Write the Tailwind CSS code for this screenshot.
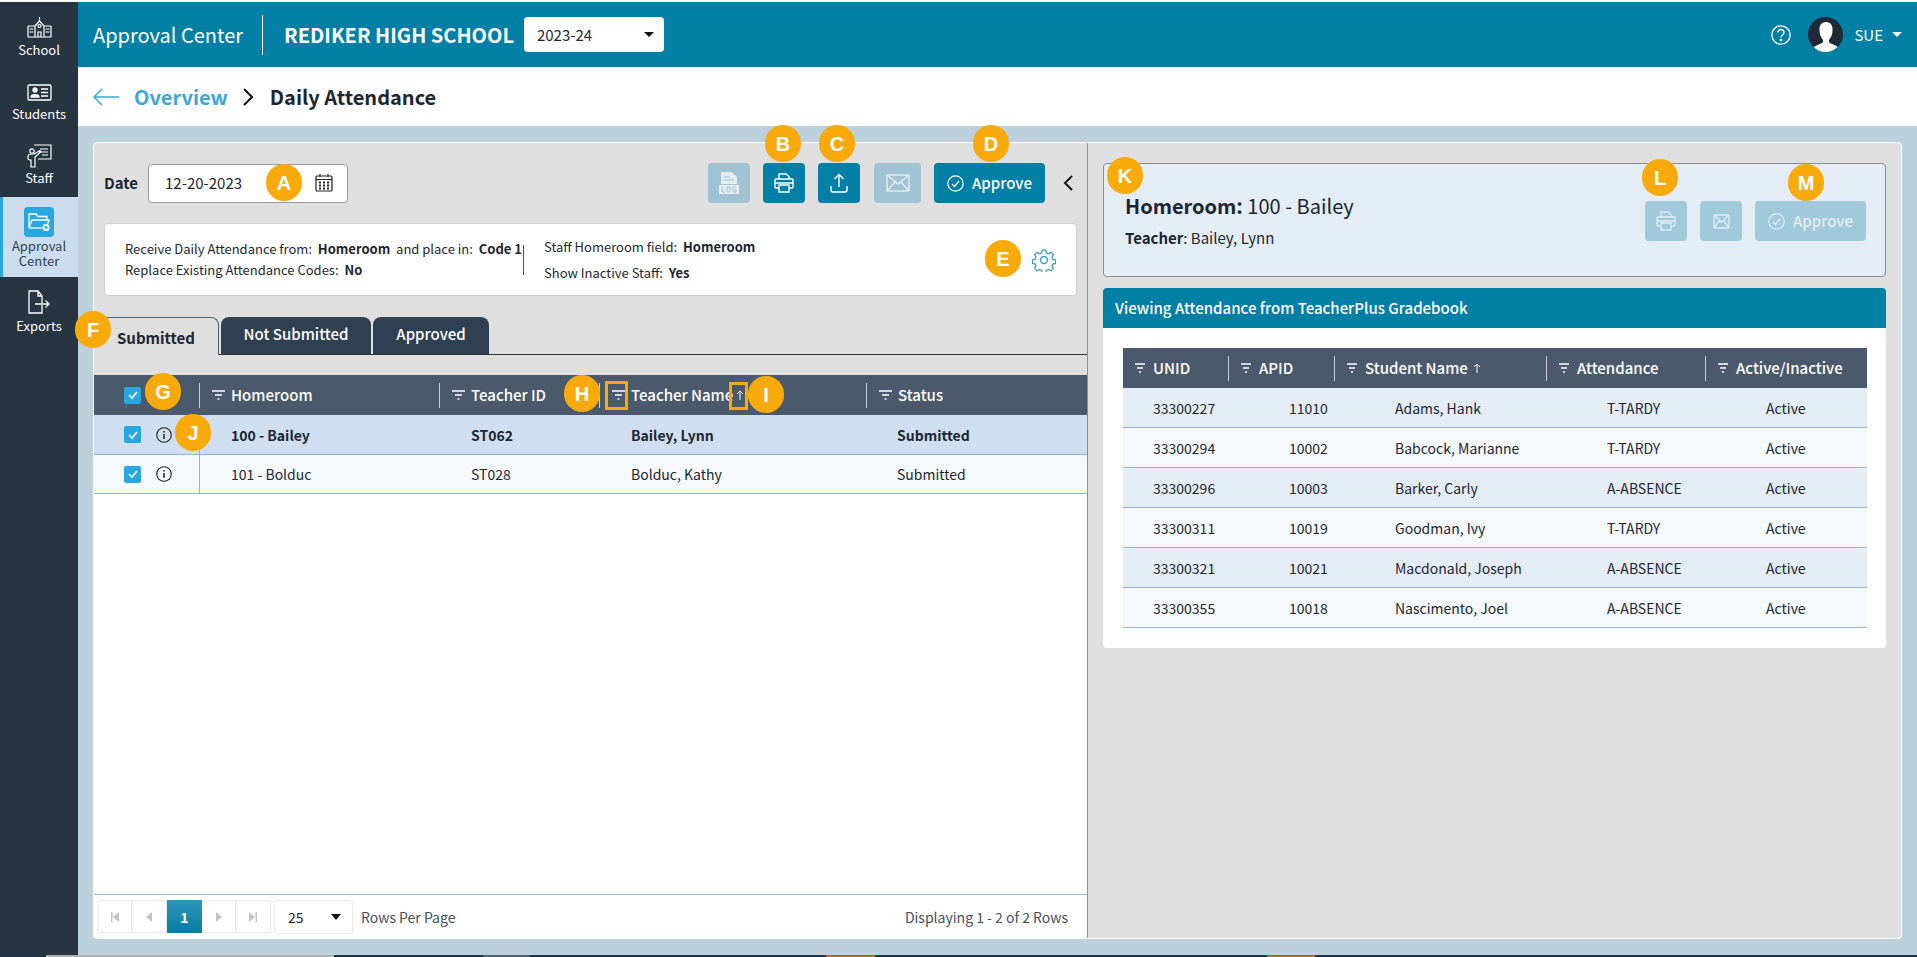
<!DOCTYPE html>
<html lang="en">
<head>
  <meta charset="UTF-8" />
  <title>Approval Center</title>
  <script src="https://cdn.jsdelivr.net/npm/@tailwindcss/browser@4"></script>
</head>
<body class="bg-white">
<div class="relative flex h-[957px] w-[1917px] flex-col overflow-hidden pt-[2px] font-['Noto_Sans_CJK_JP','Noto_Sans',sans-serif] text-[14px] leading-[20px] text-[#1c2733]">
  <div class="flex min-h-0 flex-1">

    <!-- Sidebar -->
    <aside class="flex w-[78px] shrink-0 flex-col bg-[#273442] text-center text-[13px] leading-[15px] text-white">
      <div class="flex h-[65px] flex-col items-center pt-[15px]">
        <svg class="h-[21px] w-[25px]" viewBox="0 0 25 21" fill="none" stroke="currentColor" stroke-width="1.2"><path d="M1 9h7M17 9h7M1 9v11h7V9M17 9v11h7V9M8 9l4.500-5 4.500 5v11H8zM12.500 4V0M2.500 12h4M2.500 15h4M18.500 12h4M18.500 15h4M11 20v-5h3v5"/><circle cx="12.500" cy="9" r="1.500"/></svg>
        <span class="mt-[4px]">School</span>
      </div>
      <div class="flex h-[65px] flex-col items-center pt-[17px]">
        <svg class="h-[17px] w-[25px]" viewBox="0 0 25 17" fill="none" stroke="currentColor" stroke-width="1.300"><rect x="1" y="1" width="23" height="15" rx="1"/><circle cx="8" cy="6" r="2" fill="currentColor"/><path d="M4 13c0-3 8-3 8 0z" fill="currentColor"/><path d="M14 5h7M14 8.500h7M14 12h7"/></svg>
        <span class="mt-[5px]">Students</span>
      </div>
      <div class="flex h-[65px] flex-col items-center pt-[12px]">
        <svg class="h-[24px] w-[25px]" viewBox="0 0 25 24" fill="none" stroke="currentColor" stroke-width="1.200"><path d="M7 1h17v14H11M13 5h8M13 8h8M15 11h6"/><circle cx="5" cy="7" r="2.200"/><path d="M1 12.500c0-2 2-2.500 4-2.500h2l6-3.500.7 1.300L8 13v10H4v-7H2.500L1 15z"/></svg>
        <span class="mt-[2px]">Staff</span>
      </div>
      <div class="flex h-[80px] flex-col items-center border-l-[3px] border-[#29a8df] bg-[#cbdcee] pr-[3px] pt-[10px] text-[#33414f]">
        <div class="flex h-[30px] w-[30px] items-center justify-center rounded-[4px] bg-[#29a8df]">
          <svg class="h-[22px] w-[24px]" viewBox="0 0 24 22" fill="none" stroke="white" stroke-width="1.300"><path d="M2 16V3h7l2 2.500h9V9M2 17l3-8h17l-2 6"/><path d="M2 17h13"/><circle cx="19" cy="16.500" r="3.500" fill="white" stroke="none"/><path d="M17.300 16.500h3.400M19 14.800v3.400" stroke="#29a8df"/></svg>
        </div>
        <span class="mt-[1px]">Approval<br/>Center</span>
      </div>
      <div class="flex h-[65px] flex-col items-center pt-[13px]">
        <svg class="h-[24px] w-[24px]" viewBox="0 0 24 24" fill="none" stroke="currentColor" stroke-width="1.300"><path d="M15 15V23H2V1h9l4 5v7M11 1v5h4M8 14h14M18.500 10.500 22 14l-3.500 3.500"/></svg>
        <span class="mt-[4px]">Exports</span>
      </div>
    </aside>

    <main class="flex min-w-0 flex-1 flex-col">
      <!-- Header -->
      <header class="flex h-[65px] shrink-0 items-center bg-[#017fa4] pl-[15px] text-white">
        <span class="text-[20px]">Approval Center</span>
        <span class="ml-[19px] h-[40px] w-px bg-white"></span>
        <span class="ml-[21px] text-[20px] font-semibold">REDIKER HIGH SCHOOL</span>
        <div class="ml-[10px] flex h-[35px] w-[140px] items-center rounded-[4px] bg-white pl-[13px] pr-[10px] text-[15px] text-[#1c2733]">
          2023-24
          <span class="ml-auto h-0 w-0 border-x-[5px] border-t-[5px] border-x-transparent border-t-[#111]"></span>
        </div>
        <svg class="ml-auto h-[20px] w-[20px]" viewBox="0 0 20 20" fill="none" stroke="white" stroke-width="1.300"><circle cx="10" cy="10" r="9.200"/><path d="M7 7.500c0-4 6-4 6 0 0 2.500-3 2.500-3 5"/><circle cx="10" cy="15" r=".7" fill="white"/></svg>
        <div class="ml-[17px] flex h-[35px] w-[35px] items-end justify-center overflow-hidden rounded-full bg-[#1f2a38]">
          <svg class="h-[30px] w-[28px]" viewBox="0 0 28 30" fill="white"><path d="M14 0c5 0 7 4 6.500 9 0 4-2 7-3.500 9v2c1 2 8 3 11 7v3H0v-3c3-4 10-5 11-7v-2c-1.500-2-3.500-5-3.500-9C7 4 9 0 14 0z"/></svg>
        </div>
        <span class="ml-[11px] text-[15px]">SUE</span>
        <span class="ml-[9px] mr-[15px] h-0 w-0 border-x-[5px] border-t-[5px] border-x-transparent border-t-white"></span>
      </header>

      <!-- Breadcrumb -->
      <div class="flex h-[59px] shrink-0 items-center bg-white pl-[15px] text-[20px] font-semibold">
        <svg class="h-[18px] w-[26px]" viewBox="0 0 26 18" fill="none" stroke="#3ba7d8" stroke-width="1.500"><path d="M26 9H1M9 1 1 9l8 8"/></svg>
        <span class="ml-[15px] text-[#3ba7d8]">Overview</span>
        <svg class="ml-[15px] h-[18px] w-[10px]" viewBox="0 0 10 18" fill="none" stroke="#111" stroke-width="2"><path d="m1 1 8 8-8 8"/></svg>
        <span class="ml-[17px] text-[#1c2733]">Daily Attendance</span>
      </div>

      <!-- Content -->
      <div class="min-h-0 flex-1 bg-[#bdd1dc] px-[15px] py-[16px]">
        <div class="flex h-full rounded-[4px] border border-white bg-[#dfdfdf]">

          <!-- Left pane -->
          <section class="flex w-[994px] shrink-0 flex-col border-r border-[#8f8f8f] pt-[20px]">
            <div class="flex h-[40px] shrink-0 items-center pl-[10px] pr-[14px]">
              <span class="text-[15px] font-semibold">Date</span>
              <div class="ml-[10px] flex h-[39px] w-[200px] items-center rounded-[4px] border border-[#9a9a9a] bg-white pl-[16px] text-[15px]">
                12-20-2023
                <svg class="ml-auto mr-[14px] h-[18px] w-[18px]" viewBox="0 0 18 18" fill="none" stroke="#222" stroke-width="1.200"><rect x="1" y="2" width="16" height="15" rx="1"/><path d="M1 5.500h16M5 0v3M13 0v3" /><path d="M4 8.500h2M8 8.500h2M12 8.500h2M4 11.500h2M8 11.500h2M12 11.500h2M4 14.500h2M8 14.500h2M12 14.500h2" stroke-width="1.800"/></svg>
              </div>
              <button class="ml-auto flex h-[40px] w-[42px] items-center justify-center rounded-[4px] bg-[#9fc3d2]">
                <svg class="h-[24px] w-[24px]" viewBox="0 0 24 24" fill="#e4ecef"><path d="M4 1h11l5 5v7H4zM2 14h20v9H2z"/><path d="M7 6h6M7 9h10" stroke="#9fc3d2" stroke-width="1"/><path d="M5 16v5h3M10 16h3v5h-3zM19 16h-3v5h3v-2h-1.500" fill="none" stroke="#9fc3d2" stroke-width="1"/></svg>
              </button>
              <button class="ml-[13px] flex h-[40px] w-[42px] items-center justify-center rounded-[4px] bg-[#017fa4]">
                <svg class="h-[20px] w-[20px]" viewBox="0 0 20 20" fill="none" stroke="white" stroke-width="1.400"><path d="M5 6V1h7l3 2.500V6M5 15H2a1 1 0 0 1-1-1V7a1 1 0 0 1 1-1h16a1 1 0 0 1 1 1v7a1 1 0 0 1-1 1h-3M5 12h10v7H5zM1 10h18"/></svg>
              </button>
              <button class="ml-[13px] flex h-[40px] w-[42px] items-center justify-center rounded-[4px] bg-[#017fa4]">
                <svg class="h-[20px] w-[20px]" viewBox="0 0 20 20" fill="none" stroke="white" stroke-width="1.400"><path d="M10 14V2M5.500 6 10 1.500 14.500 6M2 13v4a2 2 0 0 0 2 2h12a2 2 0 0 0 2-2v-4"/></svg>
              </button>
              <button class="ml-[14px] flex h-[40px] w-[47px] items-center justify-center rounded-[4px] bg-[#9fc3d2]">
                <svg class="h-[18px] w-[24px]" viewBox="0 0 24 18" fill="none" stroke="#e4ecef" stroke-width="1.500"><rect x="1" y="1" width="22" height="16" rx="1"/><path d="m1 1 11 9 11-9M1 17l8-9M23 17l-8-9"/></svg>
              </button>
              <button class="ml-[13px] flex h-[40px] w-[111px] items-center justify-center gap-[8px] rounded-[4px] bg-[#017fa4] text-[15px] font-medium text-white">
                <svg class="h-[17px] w-[17px]" viewBox="0 0 17 17" fill="none" stroke="white" stroke-width="1.200"><circle cx="8.500" cy="8.500" r="7.700"/><path d="m5 9 2.500 2.500L12 6"/></svg>
                Approve
              </button>
              <svg class="ml-[18px] h-[16px] w-[10px]" viewBox="0 0 10 16" fill="none" stroke="#111" stroke-width="2"><path d="M9 1 2 8l7 7"/></svg>
            </div>

            <div class="mx-[10px] mt-[20px] flex h-[73px] shrink-0 items-center rounded-[4px] border border-[#cfcfcf] bg-white pl-[20px] pr-[20px] text-[13px] leading-[20px]">
              <div class="w-[398px]">
                <div>Receive Daily Attendance from:&nbsp; <b class="font-semibold">Homeroom</b>&nbsp; and place in:&nbsp; <b class="font-semibold">Code 1</b></div>
                <div class="mt-px">Replace Existing Attendance Codes:&nbsp; <b class="font-semibold">No</b></div>
              </div>
              <span class="h-[30px] w-px bg-[#555]"></span>
              <div class="ml-[20px]">
                <div>Staff Homeroom field:&nbsp; <b class="font-semibold">Homeroom</b></div>
                <div class="mt-[6px]">Show Inactive Staff:&nbsp; <b class="font-semibold">Yes</b></div>
              </div>
              <svg class="ml-auto h-[24px] w-[24px]" viewBox="0 0 24 24" fill="none" stroke="#3a9dbf" stroke-width="1.400"><circle cx="12" cy="12" r="3.500"/><path d="M10 1h4l.7 3 2.200 1 2.700-1.600 2.800 2.800-1.600 2.700 1 2.200 3 .7v4l-3 .7-1 2.200 1.600 2.700-2.800 2.800-2.700-1.600-2.200 1-.7 3h-4l-.7-3-2.200-1-2.700 1.600-2.800-2.800 1.600-2.700-1-2.200-3-.7v-4l3-.7 1-2.200L1.600 6.200l2.800-2.800 2.700 1.600 2.200-1z" transform="translate(1.200 1.200) scale(.9)"/></svg>
            </div>

            <div class="mt-[21px] flex h-[38px] shrink-0 items-end gap-[2px] border-b border-[#333]">
              <div class="-mb-px flex h-[38px] w-[125px] items-center justify-center rounded-tr-[8px] border-r border-t border-[#55606c] bg-[#dfdfdf] pt-[2px] text-[15px] font-semibold">Submitted</div>
              <div class="flex h-[37px] w-[150px] items-center justify-center rounded-t-[8px] bg-[#2e4052] pb-[3px] text-[15px] font-medium text-white">Not Submitted</div>
              <div class="flex h-[37px] w-[116px] items-center justify-center rounded-t-[8px] bg-[#2e4052] pb-[3px] text-[15px] font-medium text-white">Approved</div>
            </div>

            <!-- Homeroom table -->
            <div class="mt-[20px] grid h-[40px] shrink-0 grid-cols-[106px_240px_160px_267px_1fr] items-center bg-[#4a5a6c] text-[15px] font-medium text-white">
              <div class="flex h-[25px] items-center border-r border-white/70 pl-[30px]">
                <span class="flex h-[17px] w-[17px] items-center justify-center rounded-[2px] bg-[#29a8df]"><svg class="h-[10px] w-[10px]" viewBox="0 0 10 10" fill="none" stroke="white" stroke-width="1.600"><path d="m1 5 3 3 5-6"/></svg></span>
              </div>
              <div class="flex h-[25px] items-center gap-[6px] border-r border-white/70 pl-[12px]">
                <svg class="h-[10px] w-[13px]" viewBox="0 0 13 10" stroke="white" stroke-width="1.300"><path d="M0 1h13M3 5h7M5.500 9h2"/></svg>Homeroom
              </div>
              <div class="flex h-[25px] items-center gap-[6px] border-r border-white/70 pl-[12px]">
                <svg class="h-[10px] w-[13px]" viewBox="0 0 13 10" stroke="white" stroke-width="1.300"><path d="M0 1h13M3 5h7M5.500 9h2"/></svg>Teacher ID
              </div>
              <div class="flex h-[25px] items-center gap-[6px] border-r border-white/70 pl-[12px]">
                <svg class="h-[10px] w-[13px]" viewBox="0 0 13 10" stroke="white" stroke-width="1.300"><path d="M0 1h13M3 5h7M5.500 9h2"/></svg>Teacher Name
                <svg class="-ml-[3px] h-[10px] w-[8px]" viewBox="0 0 8 10" fill="none" stroke="white" stroke-width="1"><path d="M4 10V1M1 4l3-3 3 3"/></svg>
              </div>
              <div class="flex h-[25px] items-center gap-[6px] pl-[12px]">
                <svg class="h-[10px] w-[13px]" viewBox="0 0 13 10" stroke="white" stroke-width="1.300"><path d="M0 1h13M3 5h7M5.500 9h2"/></svg>Status
              </div>
            </div>
            <div class="flex min-h-0 flex-1 flex-col bg-white">
              <div class="grid h-[40px] grid-cols-[106px_240px_160px_267px_1fr] items-center border-b border-[#8fb4dc] bg-[#d0dfef] font-semibold">
                <div class="flex h-full items-center gap-[15px] border-r border-[#8fb4dc] pl-[30px]">
                  <span class="flex h-[17px] w-[17px] items-center justify-center rounded-[2px] bg-[#29a8df]"><svg class="h-[10px] w-[10px]" viewBox="0 0 10 10" fill="none" stroke="white" stroke-width="1.600"><path d="m1 5 3 3 5-6"/></svg></span>
                  <svg class="h-[16px] w-[16px]" viewBox="0 0 16 16" fill="none" stroke="#222" stroke-width="1.100"><circle cx="8" cy="8" r="7.300"/><path d="M8 7v5M8 4v1.500" stroke-width="1.500"/></svg>
                </div>
                <div class="pl-[31px]">100 - Bailey</div>
                <div class="pl-[31px]">ST062</div>
                <div class="pl-[31px]">Bailey, Lynn</div>
                <div class="pl-[30px]">Submitted</div>
              </div>
              <div class="grid h-[39px] grid-cols-[106px_240px_160px_267px_1fr] items-center border-b border-[#8fb4dc] bg-[#f5f9fb]">
                <div class="flex h-full items-center gap-[15px] border-r border-[#8fb4dc] pl-[30px]">
                  <span class="flex h-[17px] w-[17px] items-center justify-center rounded-[2px] bg-[#29a8df]"><svg class="h-[10px] w-[10px]" viewBox="0 0 10 10" fill="none" stroke="white" stroke-width="1.600"><path d="m1 5 3 3 5-6"/></svg></span>
                  <svg class="h-[16px] w-[16px]" viewBox="0 0 16 16" fill="none" stroke="#222" stroke-width="1.100"><circle cx="8" cy="8" r="7.300"/><path d="M8 7v5M8 4v1.500" stroke-width="1.500"/></svg>
                </div>
                <div class="pl-[31px]">101 - Bolduc</div>
                <div class="pl-[31px]">ST028</div>
                <div class="pl-[31px]">Bolduc, Kathy</div>
                <div class="pl-[30px]">Submitted</div>
              </div>

              <!-- Pager -->
              <div class="mt-auto flex h-[44px] shrink-0 items-center border-t border-[#a3bdd0] pl-[4px] pr-[19px] text-[14px]">
                <div class="flex h-[33px] text-[#c4c4c4]">
                  <span class="flex w-[34px] items-center justify-center rounded-l-[3px] border border-[#e8e8e8]"><svg class="h-[10px] w-[8px]" viewBox="0 0 8 10" fill="currentColor"><path d="M0 0h1.500v10H0zM8 0v10L2 5z"/></svg></span>
                  <span class="flex w-[35px] items-center justify-center border-y border-r border-[#e8e8e8]"><svg class="h-[10px] w-[6px]" viewBox="0 0 6 10" fill="currentColor"><path d="M6 0v10L0 5z"/></svg></span>
                  <span class="flex w-[35px] items-center justify-center bg-gradient-to-b from-[#2b96b8] to-[#017fa4] font-bold text-white">1</span>
                  <span class="flex w-[34px] items-center justify-center border-y border-r border-[#e8e8e8]"><svg class="h-[10px] w-[6px]" viewBox="0 0 6 10" fill="currentColor"><path d="M0 0v10l6-5z"/></svg></span>
                  <span class="flex w-[35px] items-center justify-center rounded-r-[3px] border-y border-r border-[#e8e8e8]"><svg class="h-[10px] w-[8px]" viewBox="0 0 8 10" fill="currentColor"><path d="M8 0H6.500v10H8zM0 0v10l6-5z"/></svg></span>
                </div>
                <div class="ml-[3px] flex h-[34px] w-[79px] items-center rounded-[3px] border border-[#e8e8e8] pl-[13px] pr-[11px] text-[#1c2733]">
                  25
                  <span class="ml-auto h-0 w-0 border-x-[5px] border-t-[6px] border-x-transparent border-t-[#111]"></span>
                </div>
                <span class="ml-[8px] text-[#44505c]">Rows Per Page</span>
                <span class="ml-auto text-[#44505c]">Displaying 1 - 2 of 2 Rows</span>
              </div>
            </div>
          </section>

          <!-- Right pane -->
          <section class="min-w-0 flex-1 px-[15px] pt-[20px]">
            <div class="flex h-[114px] items-start rounded-[4px] border border-[#8a8f94] bg-[#e4ecf5] pl-[21px] pr-[19px]">
              <div class="mt-[27px]">
                <div class="text-[20px] leading-[30px]"><b class="font-semibold">Homeroom:</b> 100 - Bailey</div>
                <div class="mt-[7px] text-[15px] leading-[20px]"><b class="font-semibold">Teacher</b>: Bailey, Lynn</div>
              </div>
              <div class="ml-auto mt-[37px] flex gap-[13px]">
                <button class="flex h-[40px] w-[42px] items-center justify-center rounded-[4px] bg-[#a0c9dc]">
                  <svg class="h-[20px] w-[20px]" viewBox="0 0 20 20" fill="none" stroke="#e4ecf5" stroke-width="1.300"><path d="M5 6V1h7l3 2.500V6M5 15H2a1 1 0 0 1-1-1V7a1 1 0 0 1 1-1h16a1 1 0 0 1 1 1v7a1 1 0 0 1-1 1h-3M5 12h10v7H5zM1 10h18"/></svg>
                </button>
                <button class="flex h-[40px] w-[42px] items-center justify-center rounded-[4px] bg-[#a0c9dc]">
                  <svg class="h-[15px] w-[17px]" viewBox="0 0 17 15" fill="none" stroke="#e4ecf5" stroke-width="1.300"><rect x="1" y="1" width="15" height="13" rx="1"/><path d="m1 1 7.500 7L16 1M1 14l5.500-7.500M16 14l-5.500-7.500"/></svg>
                </button>
                <button class="flex h-[40px] w-[111px] items-center justify-center gap-[8px] rounded-[4px] bg-[#a0c9dc] text-[15px] font-medium text-[#e4ecf5]">
                  <svg class="h-[17px] w-[17px]" viewBox="0 0 17 17" fill="none" stroke="#e4ecf5" stroke-width="1.200"><circle cx="8.500" cy="8.500" r="7.700"/><path d="m5 9 2.500 2.500L12 6"/></svg>
                  Approve
                </button>
              </div>
            </div>

            <div class="mt-[11px] flex h-[40px] items-center rounded-t-[4px] bg-[#017fa4] pl-[12px] text-[15px] font-medium text-white">Viewing Attendance from TeacherPlus Gradebook</div>
            <div class="h-[320px] rounded-b-[4px] bg-white pl-[20px] pr-[19px] pt-[20px]">
              <div class="grid h-[40px] grid-cols-[106px_106px_212px_159px_1fr] items-center bg-[#4a5a6c] text-[15px] font-medium text-white">
                <div class="flex h-[25px] items-center gap-[8px] border-r border-white/70 pl-[12px]"><svg class="h-[10px] w-[10px]" viewBox="0 0 10 10" stroke="white" stroke-width="1.300"><path d="M0 1h10M2 5h6M4 9h2"/></svg>UNID</div>
                <div class="flex h-[25px] items-center gap-[8px] border-r border-white/70 pl-[12px]"><svg class="h-[10px] w-[10px]" viewBox="0 0 10 10" stroke="white" stroke-width="1.300"><path d="M0 1h10M2 5h6M4 9h2"/></svg>APID</div>
                <div class="flex h-[25px] items-center gap-[8px] border-r border-white/70 pl-[12px]"><svg class="h-[10px] w-[10px]" viewBox="0 0 10 10" stroke="white" stroke-width="1.300"><path d="M0 1h10M2 5h6M4 9h2"/></svg>Student Name<svg class="-ml-[3px] h-[10px] w-[8px]" viewBox="0 0 8 10" fill="none" stroke="white" stroke-width="1"><path d="M4 10V1M1 4l3-3 3 3"/></svg></div>
                <div class="flex h-[25px] items-center gap-[8px] border-r border-white/70 pl-[12px]"><svg class="h-[10px] w-[10px]" viewBox="0 0 10 10" stroke="white" stroke-width="1.300"><path d="M0 1h10M2 5h6M4 9h2"/></svg>Attendance</div>
                <div class="flex h-[25px] items-center gap-[8px] pl-[12px]"><svg class="h-[10px] w-[10px]" viewBox="0 0 10 10" stroke="white" stroke-width="1.300"><path d="M0 1h10M2 5h6M4 9h2"/></svg>Active/Inactive</div>
              </div>
              <div class="grid h-[40px] grid-cols-[106px_106px_212px_159px_1fr] items-center border-b border-[#9ab5d8] bg-[#e4ecf5] pl-[30px]">
                <div>33300227</div><div class="pl-[30px]">11010</div><div class="pl-[30px]">Adams, Hank</div><div class="pl-[30px]">T-TARDY</div><div class="pl-[30px]">Active</div>
              </div>
              <div class="grid h-[40px] grid-cols-[106px_106px_212px_159px_1fr] items-center border-b border-[#9ab5d8] bg-[#f5f9fb] pl-[30px]">
                <div>33300294</div><div class="pl-[30px]">10002</div><div class="pl-[30px]">Babcock, Marianne</div><div class="pl-[30px]">T-TARDY</div><div class="pl-[30px]">Active</div>
              </div>
              <div class="grid h-[40px] grid-cols-[106px_106px_212px_159px_1fr] items-center border-b border-[#9ab5d8] bg-[#e4ecf5] pl-[30px]">
                <div>33300296</div><div class="pl-[30px]">10003</div><div class="pl-[30px]">Barker, Carly</div><div class="pl-[30px]">A-ABSENCE</div><div class="pl-[30px]">Active</div>
              </div>
              <div class="grid h-[40px] grid-cols-[106px_106px_212px_159px_1fr] items-center border-b border-[#9ab5d8] bg-[#f5f9fb] pl-[30px]">
                <div>33300311</div><div class="pl-[30px]">10019</div><div class="pl-[30px]">Goodman, Ivy</div><div class="pl-[30px]">T-TARDY</div><div class="pl-[30px]">Active</div>
              </div>
              <div class="grid h-[40px] grid-cols-[106px_106px_212px_159px_1fr] items-center border-b border-[#9ab5d8] bg-[#e4ecf5] pl-[30px]">
                <div>33300321</div><div class="pl-[30px]">10021</div><div class="pl-[30px]">Macdonald, Joseph</div><div class="pl-[30px]">A-ABSENCE</div><div class="pl-[30px]">Active</div>
              </div>
              <div class="grid h-[40px] grid-cols-[106px_106px_212px_159px_1fr] items-center border-b border-[#9ab5d8] bg-[#f5f9fb] pl-[30px]">
                <div>33300355</div><div class="pl-[30px]">10018</div><div class="pl-[30px]">Nascimento, Joel</div><div class="pl-[30px]">A-ABSENCE</div><div class="pl-[30px]">Active</div>
              </div>
            </div>
          </section>
        </div>
      </div>
    </main>
  </div>

  <!-- Taskbar sliver at the bottom edge -->
  <div class="flex h-[2px] shrink-0 bg-[#22384a]">
    <span class="ml-[46px] w-[288px] bg-[#b0b0b0]"></span>
    <span class="ml-[149px] w-[47px] bg-[#50606c]"></span>
    <span class="ml-[296px] w-[49px] bg-[#b0682a]"></span>
    <span class="ml-[392px] w-[48px] bg-[#b0682a]"></span>
  </div>

  <!-- Callouts -->
  <div class="absolute left-[605px] top-[381px] h-[29px] w-[23px] border-[3px] border-[#f9aa0b]"></div>
  <div class="absolute left-[729px] top-[382px] h-[28px] w-[19px] border-[3px] border-[#f9aa0b]"></div>
  <span class="absolute left-[266px] top-[164px] flex h-[37px] w-[36px] items-center justify-center rounded-full bg-[#f9aa0b] font-['Liberation_Sans',sans-serif] text-[20px] font-bold text-white">A</span>
  <span class="absolute left-[765px] top-[125px] flex h-[37px] w-[36px] items-center justify-center rounded-full bg-[#f9aa0b] font-['Liberation_Sans',sans-serif] text-[20px] font-bold text-white">B</span>
  <span class="absolute left-[819px] top-[125px] flex h-[37px] w-[36px] items-center justify-center rounded-full bg-[#f9aa0b] font-['Liberation_Sans',sans-serif] text-[20px] font-bold text-white">C</span>
  <span class="absolute left-[973px] top-[125px] flex h-[37px] w-[36px] items-center justify-center rounded-full bg-[#f9aa0b] font-['Liberation_Sans',sans-serif] text-[20px] font-bold text-white">D</span>
  <span class="absolute left-[985px] top-[240px] flex h-[37px] w-[36px] items-center justify-center rounded-full bg-[#f9aa0b] font-['Liberation_Sans',sans-serif] text-[20px] font-bold text-white">E</span>
  <span class="absolute left-[75px] top-[311px] flex h-[37px] w-[36px] items-center justify-center rounded-full bg-[#f9aa0b] font-['Liberation_Sans',sans-serif] text-[20px] font-bold text-white">F</span>
  <span class="absolute left-[145px] top-[373px] flex h-[37px] w-[36px] items-center justify-center rounded-full bg-[#f9aa0b] font-['Liberation_Sans',sans-serif] text-[20px] font-bold text-white">G</span>
  <span class="absolute left-[564px] top-[375px] flex h-[37px] w-[36px] items-center justify-center rounded-full bg-[#f9aa0b] font-['Liberation_Sans',sans-serif] text-[20px] font-bold text-white">H</span>
  <span class="absolute left-[748px] top-[376px] flex h-[37px] w-[36px] items-center justify-center rounded-full bg-[#f9aa0b] font-['Liberation_Sans',sans-serif] text-[20px] font-bold text-white">I</span>
  <span class="absolute left-[175px] top-[414px] flex h-[37px] w-[36px] items-center justify-center rounded-full bg-[#f9aa0b] font-['Liberation_Sans',sans-serif] text-[20px] font-bold text-white">J</span>
  <span class="absolute left-[1107px] top-[157px] flex h-[37px] w-[36px] items-center justify-center rounded-full bg-[#f9aa0b] font-['Liberation_Sans',sans-serif] text-[20px] font-bold text-white">K</span>
  <span class="absolute left-[1642px] top-[159px] flex h-[37px] w-[36px] items-center justify-center rounded-full bg-[#f9aa0b] font-['Liberation_Sans',sans-serif] text-[20px] font-bold text-white">L</span>
  <span class="absolute left-[1788px] top-[164px] flex h-[37px] w-[36px] items-center justify-center rounded-full bg-[#f9aa0b] font-['Liberation_Sans',sans-serif] text-[20px] font-bold text-white">M</span>
</div>
</body>
</html>
